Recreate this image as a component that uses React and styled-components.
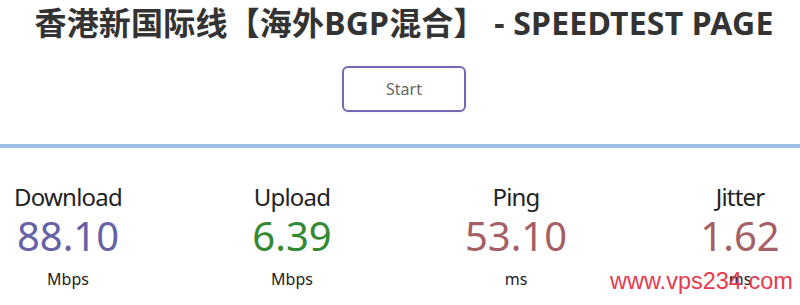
import React from "react";
import styled, { createGlobalStyle } from "styled-components";

const GlobalStyle = createGlobalStyle`
  html, body {
    margin: 0;
    padding: 0;
    background: #ffffff;
    overflow: hidden;
  }
  body {
    font-family: "Noto Sans", "Noto Sans CJK SC", sans-serif;
  }
`;

const Page = styled.div`
  position: relative;
  width: 800px;
  height: 305px;
  overflow: hidden;
  padding: 3px 0 0 8px;
  box-sizing: border-box;
`;

const Title = styled.h1`
  margin: 0;
  font-size: 32px;
  line-height: 40px;
  font-weight: 700;
  color: #333333;
  text-align: center;
  white-space: nowrap;
  letter-spacing: 0.2px;
`;

const Controls = styled.div`
  display: flex;
  justify-content: center;
  margin-top: 23px;
`;

const StartButton = styled.button`
  width: 124px;
  height: 46px;
  box-sizing: border-box;
  border: 2px solid #7469b6;
  border-radius: 6px;
  background: #ffffff;
  color: #666666;
  font-family: "Noto Sans", sans-serif;
  font-size: 16px;
  cursor: pointer;
  box-shadow: 0 0 4px rgba(0, 0, 0, 0.06);
`;

const TestArea = styled.div`
  margin: 32px 0 0 -8px;
  border-top: 4px solid #9dbde6;
  padding-top: 34px;
`;

const Row = styled.div`
  display: flex;
  margin-left: -44px;
`;

const Meter = styled.div`
  flex: 0 0 224px;
  display: flex;
  flex-direction: column;
  align-items: center;
`;

const Label = styled.div`
  font-size: 24px;
  line-height: 30px;
  color: #222222;
  letter-spacing: -0.8px;
`;

const Value = styled.div`
  font-size: 40px;
  line-height: 44px;
  margin-top: 2px;
  color: ${(p) => p.$color};
`;

const Unit = styled.div`
  font-size: 16px;
  line-height: 20px;
  margin-top: 11px;
  color: #222222;
`;

const Watermark = styled.div`
  position: absolute;
  left: 610px;
  top: 266px;
  font-family: "Liberation Sans", Arial, sans-serif;
  font-size: 23.5px;
  line-height: 30px;
  color: #e8394d;
  white-space: nowrap;
`;

const meters = [
  { label: "Download", value: "88.10", unit: "Mbps", color: "#6662a8" },
  { label: "Upload", value: "6.39", unit: "Mbps", color: "#338a33" },
  { label: "Ping", value: "53.10", unit: "ms", color: "#a65f64" },
  { label: "Jitter", value: "1.62", unit: "ms", color: "#a65f64" },
];

export default function App() {
  return (
    <Page>
      <GlobalStyle />
      <Title>香港新国际线【海外BGP混合】 - SPEEDTEST PAGE</Title>
      <Controls>
        <StartButton>Start</StartButton>
      </Controls>
      <TestArea>
        <Row>
          {meters.map((m) => (
            <Meter key={m.label}>
              <Label>{m.label}</Label>
              <Value $color={m.color}>{m.value}</Value>
              <Unit>{m.unit}</Unit>
            </Meter>
          ))}
        </Row>
      </TestArea>
      <Watermark>www.vps234.com</Watermark>
    </Page>
  );
}
